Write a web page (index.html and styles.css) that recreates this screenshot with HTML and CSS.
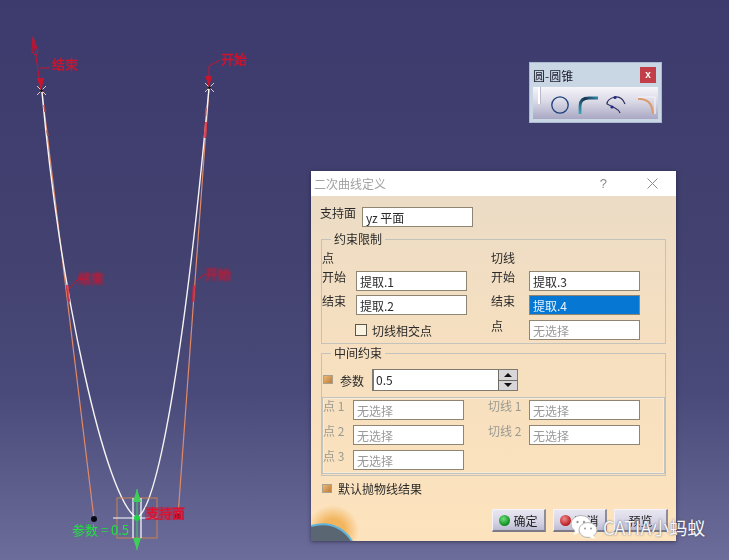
FILE: index.html
```html
<!DOCTYPE html>
<html lang="zh">
<head>
<meta charset="utf-8">
<title>二次曲线定义</title>
<link rel="stylesheet" href="styles.css">
</head>
<body>
<div class="desktop">
  <svg class="sketch" width="729" height="560" viewBox="0 0 729 560">
    <g class="soft">
      <path class="tangent" d="M42 92 L94 519"/>
      <path class="tangent" d="M209 88 L178 516"/>
      <path class="curve" d="M42 92 C60 290 105 500 137 518 C160 505 187 330 209 88"/>
      <path class="curve-gap" d="M44 105 L45 112 M47 130 L48 136 M206 108 L205.500 116"/>
      <path class="red-line" d="M33 37 L41 90 M40 68 H50 M209 66 V87 M209 66 L220 60 M68 290 L78 279 H88 M197 280 L205 274"/>
      <path class="red-outline" d="M33 37 L38 52 L36 56 L32 52 Z"/>
      <path class="red-fill" d="M37 78 L44 78 L41 91 Z M205 76 L212 76 L209 87 Z"/>
      <path class="red-thick" d="M206 122 L205 138 M67 285 L69 302 M194 285 L193 302"/>
      <path class="cross" d="M37 86 L46 95 M46 86 L37 95 M205 83 L214 92 M214 83 L205 92"/>
      <circle class="cross-core" cx="41.500" cy="90.500" r="1.500"/>
      <circle class="cross-core" cx="209.500" cy="87.500" r="1.500"/>
      <text class="red-label" x="52" y="69">结束</text>
      <text class="red-label" x="221" y="64">开始</text>
      <text class="red-label faint" x="78" y="283">结束</text>
      <text class="red-label faint" x="205" y="279">开始</text>
      <circle class="black-dot" cx="94" cy="519" r="3"/>
      <circle class="black-dot" cx="178" cy="516" r="3"/>
      <rect class="box" x="117" y="498" width="40" height="40"/>
      <path class="white-line" d="M113 518 H157 M133 498 V538 M141 498 V538"/>
      <path class="green-line" d="M137 489 V550"/>
      <path class="green-fill" d="M137 489 L133 502 H141 Z M137 550 L133 538 H141 Z"/>
      <circle class="green-dot" cx="137" cy="518" r="3"/>
      <rect class="pink" x="145" y="507" width="39" height="13"/>
      <text class="red-label strong" x="146" y="518">支持面</text>
      <text class="green-label" x="72" y="535">参数 = 0.5</text>
    </g>
  </svg>

  <div class="toolbar">
    <div class="toolbar-title">
      <span>圆-圆锥</span>
      <span class="toolbar-close">x</span>
    </div>
    <div class="toolbar-strip">
      <span class="handle"></span>
      <svg class="tool" width="18" height="18" viewBox="0 0 18 18"><circle cx="9" cy="9" r="8.2" fill="none" stroke="#1b3f7d" stroke-width="1.3"/></svg>
      <svg class="tool" width="20" height="18" viewBox="0 0 20 18"><defs><linearGradient id="bend" x1="0" y1="1" x2="1" y2="0"><stop offset="0" stop-color="#3aa8b8"/><stop offset="0.6" stop-color="#17324f"/><stop offset="1" stop-color="#2f86a8"/></linearGradient></defs><path d="M2 18 V10 Q2 2 11 2 H20" fill="none" stroke="url(#bend)" stroke-width="2.8"/></svg>
      <svg class="tool" width="20" height="19" viewBox="0 0 20 19"><path d="M19 9 Q16 1 9 2 Q1 4 1 9 Q5 11 9 13 Q13 15 14 18" fill="none" stroke="#2c2f5a" stroke-width="1.2"/><circle cx="9" cy="2.500" r="1.600" fill="#232a88"/><circle cx="6" cy="12" r="1.600" fill="#232a88"/></svg>
      <svg class="tool" width="18" height="18" viewBox="0 0 18 18"><path d="M0 1 H17 V18" fill="none" stroke="#f4f4fa" stroke-width="1.200"/><path d="M0 3 Q14 2 15 18" fill="none" stroke="#dc9a68" stroke-width="2"/></svg>
    </div>
  </div>

  <div class="dialog">
    <div class="titlebar">
      <span class="titlebar-text">二次曲线定义</span>
      <span class="titlebar-help">?</span>
      <svg class="titlebar-x" width="11" height="11" viewBox="0 0 11 11"><path d="M0.500 0.500 L10.500 10.500 M10.500 0.500 L0.500 10.500" stroke="#8a8a8a" fill="none"/></svg>
    </div>
    <div class="dialog-body">
      <svg class="globe" width="50" height="36" viewBox="0 0 50 36"><defs><radialGradient id="glow" gradientUnits="userSpaceOnUse" cx="22" cy="26" r="26"><stop offset="0.45" stop-color="#f2b55e"/><stop offset="1" stop-color="#f2b55e" stop-opacity="0"/></radialGradient></defs><rect width="50" height="36" fill="url(#glow)"/><path d="M0 21 Q26 14 41 36 H0 Z" fill="#5a6672"/><path d="M0 21 Q26 14 41 36" fill="none" stroke="#5fb4dc" stroke-width="2"/></svg>

      <div class="support-row">
        <span class="text-label">支持面</span>
        <span class="field">yz 平面</span>
      </div>

      <fieldset class="group group-limits">
        <legend>约束限制</legend>
        <div class="limits-grid head-row">
          <span class="text-label slot-a">点</span>
          <span class="text-label slot-b">切线</span>
        </div>
        <div class="limits-grid">
          <span class="text-label">开始</span><span class="field">提取.1</span>
          <span class="text-label slot-b">开始</span><span class="field">提取.3</span>
        </div>
        <div class="limits-grid">
          <span class="text-label">结束</span><span class="field">提取.2</span>
          <span class="text-label slot-b">结束</span><span class="field selected">提取.4</span>
        </div>
        <div class="limits-grid">
          <label class="tangent-check"><span class="checkbox"></span>切线相交点</label>
          <span class="text-label slot-b">点</span><span class="field empty">无选择</span>
        </div>
      </fieldset>

      <fieldset class="group group-middle">
        <legend>中间约束</legend>
        <div class="param-row">
          <span class="orange-check"></span>
          <span class="param-label">参数</span>
          <div class="spin">
            <span class="spin-value">0.5</span>
            <span class="spin-buttons">
              <span class="spin-btn"><i class="arrow-up"></i></span>
              <span class="spin-btn"><i class="arrow-down"></i></span>
            </span>
          </div>
        </div>
        <div class="inner-box">
          <div class="inner-row">
            <span class="text-label muted">点 1</span><span class="field empty">无选择</span>
            <span class="text-label muted slot-c">切线 1</span><span class="field empty">无选择</span>
          </div>
          <div class="inner-row">
            <span class="text-label muted">点 2</span><span class="field empty">无选择</span>
            <span class="text-label muted slot-c">切线 2</span><span class="field empty">无选择</span>
          </div>
          <div class="inner-row">
            <span class="text-label muted">点 3</span><span class="field empty">无选择</span>
          </div>
        </div>
      </fieldset>

      <div class="default-row">
        <span class="orange-check"></span>
        <span>默认抛物线结果</span>
      </div>

      <div class="button-row">
        <span class="btn"><i class="ball ball-green"></i>确定</span>
        <span class="btn"><i class="ball ball-red"></i>取消</span>
        <span class="btn">预览</span>
      </div>
    </div>
  </div>

  <div class="watermark">
    <svg width="28" height="26" viewBox="0 0 28 26"><ellipse cx="11" cy="10" rx="10" ry="8.500" fill="#fff" stroke="#b5b5b5"/><path d="M5 16 L4 21 L10 18 Z" fill="#fff"/><ellipse cx="18" cy="16" rx="9" ry="7.500" fill="#fff" stroke="#b5b5b5"/><path d="M23 21 L25 25 L19 23 Z" fill="#fff"/><circle cx="7.500" cy="8" r="1.200" fill="#9a9a9a"/><circle cx="14" cy="8" r="1.200" fill="#9a9a9a"/><circle cx="15" cy="14.500" r="1" fill="#9a9a9a"/><circle cx="21" cy="14.500" r="1" fill="#9a9a9a"/></svg>
    <span class="watermark-text">CATIA小蚂蚁</span>
  </div>
</div>
</body>
</html>
```
FILE: styles.css
```css
* { box-sizing: border-box; }
html, body { margin: 0; padding: 0; }
body { font-family: "Noto Sans CJK SC", "Liberation Sans", sans-serif; }

.desktop {
  position: relative;
  width: 729px;
  height: 560px;
  overflow: hidden;
  background: linear-gradient(180deg, #3d3b6e 0%, #42416f 45%, #4a4a7a 70%, #6d6d9b 100%);
}

/* Sketch canvas */
.sketch { position: absolute; left: 0; top: 0; }
.soft { filter: blur(0.35px); }
.tangent { fill: none; stroke: #e08a68; stroke-width: 1.2; }
.curve { fill: none; stroke: #f6f4f4; stroke-width: 1.4; }
.curve-gap { fill: none; stroke: #b05050; stroke-width: 1.6; }
.red-line { fill: none; stroke: #c8142e; stroke-width: 1; }
.red-outline { fill: none; stroke: #c8142e; stroke-width: 1; }
.red-fill { fill: #c8142e; }
.red-thick { fill: none; stroke: #d8243a; stroke-width: 2.5; opacity: 0.8; }
.cross { fill: none; stroke: #e8c8b8; stroke-width: 1; }
.cross-core { fill: #1a1020; }
.red-label { font-size: 13px; fill: #d0142e; stroke: #d0142e; stroke-width: 0.4; font-family: "Noto Sans CJK SC", sans-serif; filter: blur(0.5px); }
.red-label.faint { filter: blur(0.9px); }
.red-label.strong { fill: #e01030; stroke: #e01030; }
.pink { fill: #b02a4a; opacity: 0.55; }
.black-dot { fill: #0a0a12; }
.box { fill: none; stroke: #c8824e; stroke-width: 1; }
.white-line { fill: none; stroke: #fff; stroke-width: 1.2; }
.green-line { fill: none; stroke: #3ecf5a; stroke-width: 1; }
.green-fill { fill: #3ecf5a; }
.green-dot { fill: #22d04a; }
.green-label { font-size: 13px; fill: #22e040; font-family: "Noto Sans CJK SC", sans-serif; }

/* Floating toolbar */
.toolbar {
  position: absolute;
  left: 529px;
  top: 62px;
  width: 133px;
  height: 61px;
  display: flex;
  flex-direction: column;
  padding: 0 3px 3px;
  background: #c9d6e4;
  border: 1px solid #a9bace;
  filter: blur(0.3px);
}
.toolbar-title {
  height: 24px;
  display: flex;
  align-items: center;
  justify-content: space-between;
  font-size: 12px;
  color: #1a1a2a;
  padding: 0 2px 0 0;
}
.toolbar-close {
  width: 16px;
  height: 16px;
  background: #c23f4a;
  color: #fff;
  font: bold 10px/15px "Liberation Sans", sans-serif;
  text-align: center;
}
.toolbar-strip {
  flex: 1;
  display: flex;
  align-items: center;
  background: linear-gradient(180deg, #f6f5fa 0%, #dad9e6 45%, #a9a7c4 100%);
  padding-left: 5px;
}
.handle {
  width: 2px;
  height: 17px;
  margin-top: -15px;
  background: #fff;
  box-shadow: 1px 0 0 #b8b8c8;
}
.tool { margin-top: 3px; }
.tool:nth-of-type(1) { margin-left: 11px; }
.tool:nth-of-type(2) { margin-left: 9px; }
.tool:nth-of-type(3) { margin-left: 8px; }
.tool:nth-of-type(4) { margin-left: 12px; }

/* Dialog window */
.dialog {
  position: absolute;
  left: 311px;
  top: 171px;
  width: 365px;
  height: 370px;
  display: flex;
  flex-direction: column;
  box-shadow: 0 1px 4px rgba(20, 20, 40, 0.55);
  font-size: 12px;
  color: #2a2a2a;
  filter: blur(0.3px);
}
.titlebar {
  height: 25px;
  flex: none;
  background: #fff;
  display: flex;
  align-items: center;
  padding: 0 18px 0 3px;
}
.titlebar-text { color: #a2a2a2; flex: 1; }
.titlebar-help { color: #8a8a8a; margin-right: 40px; font-family: "Liberation Sans", sans-serif; font-size: 13px; }
.dialog-body {
  position: relative;
  flex: 1;
  display: flex;
  flex-direction: column;
  padding: 11px 10px 0;
  background: linear-gradient(180deg, #ecdcc6 0%, #f5dfc0 40%, #fde3bd 100%);
}
.globe { position: absolute; left: 0; bottom: 0; }

.text-label { line-height: 14px; margin-top: -1px; align-self: start; }
.muted { color: #9a9a92; }
.field {
  height: 20px;
  width: 111px;
  display: block;
  background: #fff;
  border: 1px solid #8e8672;
  padding: 0 3px;
  font-size: 12px;
  line-height: 19px;
  color: #2a2a2a;
  white-space: nowrap;
}
.field.empty { color: #9a9a9a; }
.field.selected {
  background: #0678d4;
  color: #e4f2ff;
}

.support-row {
  display: flex;
  align-items: flex-start;
  gap: 6px;
  margin-left: -1px;
  height: 20px;
}
.support-row .text-label { width: 36px; }

.group {
  width: 345px;
  margin: 0;
  min-width: 0;
  border: 1px solid #c3c3bd;
}
.group legend {
  margin-left: 9px;
  padding: 0 3px;
  font-size: 12px;
  line-height: 14px;
}
.group-limits {
  margin-top: 5px;
  padding: 6px 0 3px;
  height: 112px;
  display: flex;
  flex-direction: column;
  gap: 4.5px;
}
.limits-grid {
  display: grid;
  grid-template-columns: 34px 111px 24px 38px 111px;
  height: 20px;
}
.limits-grid.head-row { height: 14px; }
.slot-a { grid-column: 1; }
.slot-b { grid-column: 4; white-space: nowrap; }
.tangent-check {
  grid-column: 1 / span 2;
  display: flex;
  align-items: center;
  padding-left: 33px;
  gap: 5px;
  margin-top: 1px;
  white-space: nowrap;
}
.checkbox {
  width: 12px;
  height: 12px;
  border: 1px solid #5c5648;
  background: #fbf3e2;
}

.group-middle { margin-top: 2px; padding: 9px 0 1px; height: 130px; }
.param-row {
  height: 22px;
  display: flex;
  align-items: center;
}
.orange-check {
  width: 10px;
  height: 9px;
  flex: none;
  background: linear-gradient(135deg, #e9b877, #c07a36);
  border: 1px solid #a9a08e;
}
.param-row .orange-check { margin-left: 1px; margin-top: -2px; }
.param-label { margin-left: 7px; width: 32px; }
.spin {
  width: 146px;
  height: 22px;
  display: flex;
  border: 1px solid #7e7a70;
  border-left-width: 2px;
  background: #fff;
}
.spin-value { flex: 1; padding-left: 2px; line-height: 19px; font-size: 12px; }
.spin-buttons {
  width: 19px;
  display: flex;
  flex-direction: column;
  gap: 1px;
  background: #6f6c64;
  padding: 0 0 0 1px;
}
.spin-btn {
  flex: 1;
  background: #d8d6d8;
  display: flex;
  align-items: center;
  justify-content: center;
}
.arrow-up, .arrow-down {
  width: 0;
  height: 0;
  border-left: 4px solid transparent;
  border-right: 4px solid transparent;
}
.arrow-up { border-bottom: 4px solid #111; }
.arrow-down { border-top: 4px solid #111; }

.inner-box {
  margin-top: 6px;
  height: 77px;
  border: 1px solid #c3c3bd;
  box-shadow: inset 0 0 0 1px #f7ecd9;
  padding-top: 2px;
  display: flex;
  flex-direction: column;
  gap: 5px;
}
.inner-row {
  display: grid;
  grid-template-columns: 30px 111px 24px 41px 111px;
  height: 20px;
}
.inner-row .text-label { white-space: nowrap; }
.slot-c { grid-column: 4; }

.default-row {
  margin-top: 4px;
  display: flex;
  align-items: center;
  gap: 6px;
  margin-left: 1px;
  height: 16px;
}

.button-row {
  margin-top: 13px;
  margin-right: -2px;
  display: flex;
  justify-content: flex-end;
  gap: 7px;
}
.btn {
  width: 54px;
  height: 23px;
  display: flex;
  align-items: center;
  justify-content: center;
  gap: 3px;
  font-size: 12px;
  color: #222;
  background: linear-gradient(180deg, #e8e6f0 0%, #d6d4e4 60%, #bcbad2 100%);
  border-top: 1px solid #f4f2f8;
  border-left: 1px solid #f4f2f8;
  border-right: 2px solid #8e8c98;
  border-bottom: 2px solid #7c7a86;
}
.ball {
  width: 11px;
  height: 11px;
  border-radius: 50%;
}
.ball-green { background: radial-gradient(circle at 40% 35%, #6fe07a, #0f8a22 70%); }
.ball-red { background: radial-gradient(circle at 40% 35%, #f08a8a, #b81c22 70%); }

/* Watermark overlaying the screenshot */
.watermark {
  position: absolute;
  left: 570px;
  top: 514px;
  display: flex;
  align-items: center;
  gap: 5px;
}
.watermark-text {
  font-size: 18px;
  line-height: 26px;
  color: #f8f8fb;
  white-space: nowrap;
  text-shadow: 0 0 2px rgba(70, 70, 90, 0.9);
}
```
